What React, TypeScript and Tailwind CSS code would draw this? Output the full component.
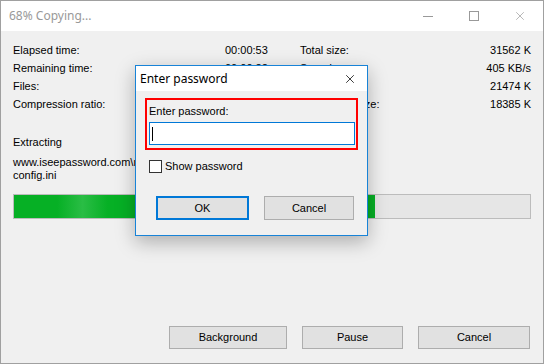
import { X } from "lucide-react";

const body = { fontFamily: '"Liberation Sans", Arial, sans-serif' };
const ui = { fontFamily: '"Noto Sans", "Open Sans", sans-serif' };

const stats = [
  ["Elapsed time:", "00:00:53", "Total size:", "31562 K"],
  ["Remaining time:", "00:00:22", "Speed:", "405 KB/s"],
  ["Files:", "12", "Unpacked:", "21474 K"],
  ["Compression ratio:", "86%", "Packed file size:", "18385 K"],
];

function WinButton({ children, w }: { children: React.ReactNode; w: string }) {
  return (
    <button
      className={`h-[23px] ${w} border border-[#adadad] bg-[#e1e1e1] text-[11px] text-black`}
      style={body}
    >
      {children}
    </button>
  );
}

function PasswordDialog() {
  return (
    <div className="absolute left-[134px] top-[64px] flex h-[171px] w-[233px] flex-col border border-[#1883d7] bg-[#f0f0f0] shadow-[0_6px_18px_rgba(0,0,0,0.28)]">
      <div className="flex h-[25px] items-center justify-between bg-white pl-[4px] pr-[10px]">
        <span className="text-[12px] text-black" style={ui}>
          Enter password
        </span>
        <X className="h-[14px] w-[14px] text-black" strokeWidth={1.3} />
      </div>
      <div className="flex flex-col pl-[9px] pt-[7px]" style={body}>
        <div className="flex h-[52px] w-[213px] flex-col border-2 border-[#ff0000] pl-[2px] pt-[2px]">
          <span className="text-[11px] leading-[18px] text-black">Enter password:</span>
          <div className="mt-[2px] flex h-[23px] w-[206px] items-center border border-[#0078d7] bg-white pl-[2px]">
            <div className="h-[14px] w-px bg-black" />
          </div>
        </div>
        <label className="ml-[4px] mt-[8px] flex h-[17px] items-center gap-[3px]">
          <span className="h-[13px] w-[13px] border border-[#333333] bg-white" />
          <span className="text-[11px] text-black">Show password</span>
        </label>
        <div className="ml-[11px] mt-[21px] flex gap-[15px]">
          <button className="h-[24px] w-[93px] border-2 border-[#0078d7] bg-[#e1e1e1] text-[11px] text-black">
            OK
          </button>
          <button className="h-[24px] w-[90px] border border-[#adadad] bg-[#e1e1e1] text-[11px] text-black">
            Cancel
          </button>
        </div>
      </div>
    </div>
  );
}

export default function App() {
  return (
    <div className="relative flex h-[364px] w-[544px] flex-col border border-[#a0a0a0] bg-[#f0f0f0]">
      {/* title bar */}
      <div className="flex h-[30px] items-center justify-between bg-white">
        <span className="pl-[8px] text-[12px] text-[#999999]" style={ui}>
          68% Copying...
        </span>
        <div className="flex h-full text-[#999999]">
          <div className="flex w-[46px] items-center justify-center">
            <div className="h-px w-[10px] bg-[#999999]" />
          </div>
          <div className="flex w-[46px] items-center justify-center">
            <div className="h-[10px] w-[10px] border border-[#999999]" />
          </div>
          <div className="flex w-[46px] items-center justify-center">
            <X className="h-[14px] w-[14px]" strokeWidth={1.2} />
          </div>
        </div>
      </div>

      {/* body */}
      <div className="flex flex-1 flex-col px-[12px] pt-[10px] text-[11px] text-black" style={body}>
        <div className="grid grid-cols-[212px_38px_1fr_auto] leading-[18px]">
          {stats.map((r) => (
            <div key={r[0]} className="contents">
              <span>{r[0]}</span>
              <span className="text-right">{r[1]}</span>
              <span className="pl-[37px]">{r[2]}</span>
              <span className="text-right">{r[3]}</span>
            </div>
          ))}
        </div>

        <div className="mt-[20px] leading-[18px]">Extracting</div>
        <div className="mt-[5px] whitespace-nowrap leading-[13px]">www.iseepassword.com\r</div>
        <div className="leading-[13px]">config.ini</div>

        <div className="mt-[12px] h-[25px] w-[518px] border border-[#bcbcbc] bg-[#e6e6e6]">
          <div
            className="h-full bg-[linear-gradient(90deg,#06b025_0%,#06b025_12%,#2abd45_19%,#06b025_26%,#06b025_100%)]"
            style={{ width: "70%" }}
          />
        </div>

        <div className="mb-[14px] mt-auto flex justify-end gap-[15px] pr-[1px]">
          <WinButton w="w-[118px]">Background</WinButton>
          <WinButton w="w-[101px]">Pause</WinButton>
          <WinButton w="w-[112px]">Cancel</WinButton>
        </div>
      </div>

      <PasswordDialog />
    </div>
  );
}
